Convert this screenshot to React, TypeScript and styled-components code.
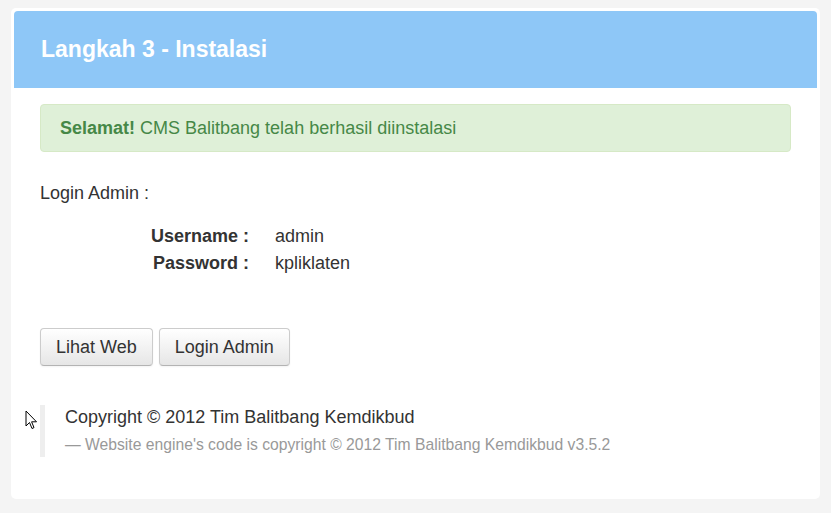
import React from 'react';
import styled, { createGlobalStyle } from 'styled-components';

const GlobalStyle = createGlobalStyle`
  html, body {
    margin: 0;
    padding: 0;
    background: #f4f4f4;
    font-family: 'Liberation Sans', Arial, sans-serif;
    color: #333;
  }
`;

const Page = styled.div`
  position: relative;
  padding: 8px 11px 14px;
`;

const Card = styled.div`
  background: #fff;
  border-radius: 5px;
  padding: 3px 3px 0;
  height: 491px;
  box-sizing: border-box;
`;

const Header = styled.div`
  background: #8ec7f7;
  border-radius: 4px 4px 0 0;
  height: 77px;
  display: flex;
  align-items: center;
  padding: 0 27px;
  color: #fff;
  font-size: 23px;
  font-weight: bold;
`;

const Body = styled.div`
  padding: 16px 26px 0;
`;

const Alert = styled.div`
  background: #dff0d8;
  border: 1px solid #d6e9c6;
  border-radius: 4px;
  color: #468847;
  font-size: 18px;
  height: 48px;
  box-sizing: border-box;
  display: flex;
  align-items: center;
  padding: 0 19px;

  strong {
    margin-right: 5px;
  }
`;

const Label = styled.div`
  font-size: 18px;
  margin-top: 31px;
  line-height: 20px;
`;

const Credentials = styled.div`
  display: grid;
  grid-template-columns: 209px auto;
  column-gap: 26px;
  row-gap: 7px;
  margin-top: 23px;
  font-size: 18px;
  line-height: 20px;
`;

const Key = styled.div`
  text-align: right;
  font-weight: bold;
`;

const Value = styled.div``;

const Buttons = styled.div`
  display: flex;
  gap: 6px;
  margin-top: 55px;
`;

const Button = styled.button`
  height: 38px;
  padding: 0 15px;
  font-family: 'Liberation Sans', Arial, sans-serif;
  font-size: 18px;
  color: #333;
  background: linear-gradient(#ffffff, #e6e6e6);
  border: 1px solid #cccccc;
  border-bottom-color: #b3b3b3;
  border-radius: 4px;
  box-shadow: inset 0 1px 0 rgba(255, 255, 255, 0.2), 0 1px 2px rgba(0, 0, 0, 0.05);
  cursor: pointer;
`;

const Quote = styled.blockquote`
  margin: 39px 0 0;
  padding: 0 0 0 20px;
  border-left: 5px solid #eeeeee;
  height: 52px;
  box-sizing: border-box;
`;

const QuoteText = styled.p`
  margin: 0;
  font-size: 18px;
  line-height: 24px;
  color: #333;
`;

const QuoteSmall = styled.small`
  display: block;
  margin-top: 6px;
  font-size: 15.7px;
  line-height: 20px;
  color: #999999;
`;

const Cursor = styled.svg`
  position: absolute;
  left: 25px;
  top: 410px;
`;

export default function App() {
  return (
    <Page>
      <GlobalStyle />
      <Card>
        <Header>Langkah 3 - Instalasi</Header>
        <Body>
          <Alert>
            <strong>Selamat!</strong> CMS Balitbang telah berhasil diinstalasi
          </Alert>
          <Label>Login Admin :</Label>
          <Credentials>
            <Key>Username :</Key>
            <Value>admin</Value>
            <Key>Password :</Key>
            <Value>kpliklaten</Value>
          </Credentials>
          <Buttons>
            <Button>Lihat Web</Button>
            <Button>Login Admin</Button>
          </Buttons>
          <Quote>
            <QuoteText>Copyright © 2012 Tim Balitbang Kemdikbud</QuoteText>
            <QuoteSmall>— Website engine's code is copyright © 2012 Tim Balitbang Kemdikbud v3.5.2</QuoteSmall>
          </Quote>
        </Body>
      </Card>
      <Cursor width="13" height="21" viewBox="0 0 13 21">
        <path d="M1 1 L1 16 L4.5 12.5 L7 18.5 L9 17.6 L6.6 11.8 L11.5 11.8 Z" fill="#fff" stroke="#000" strokeWidth="1" strokeLinejoin="round" />
      </Cursor>
    </Page>
  );
}
